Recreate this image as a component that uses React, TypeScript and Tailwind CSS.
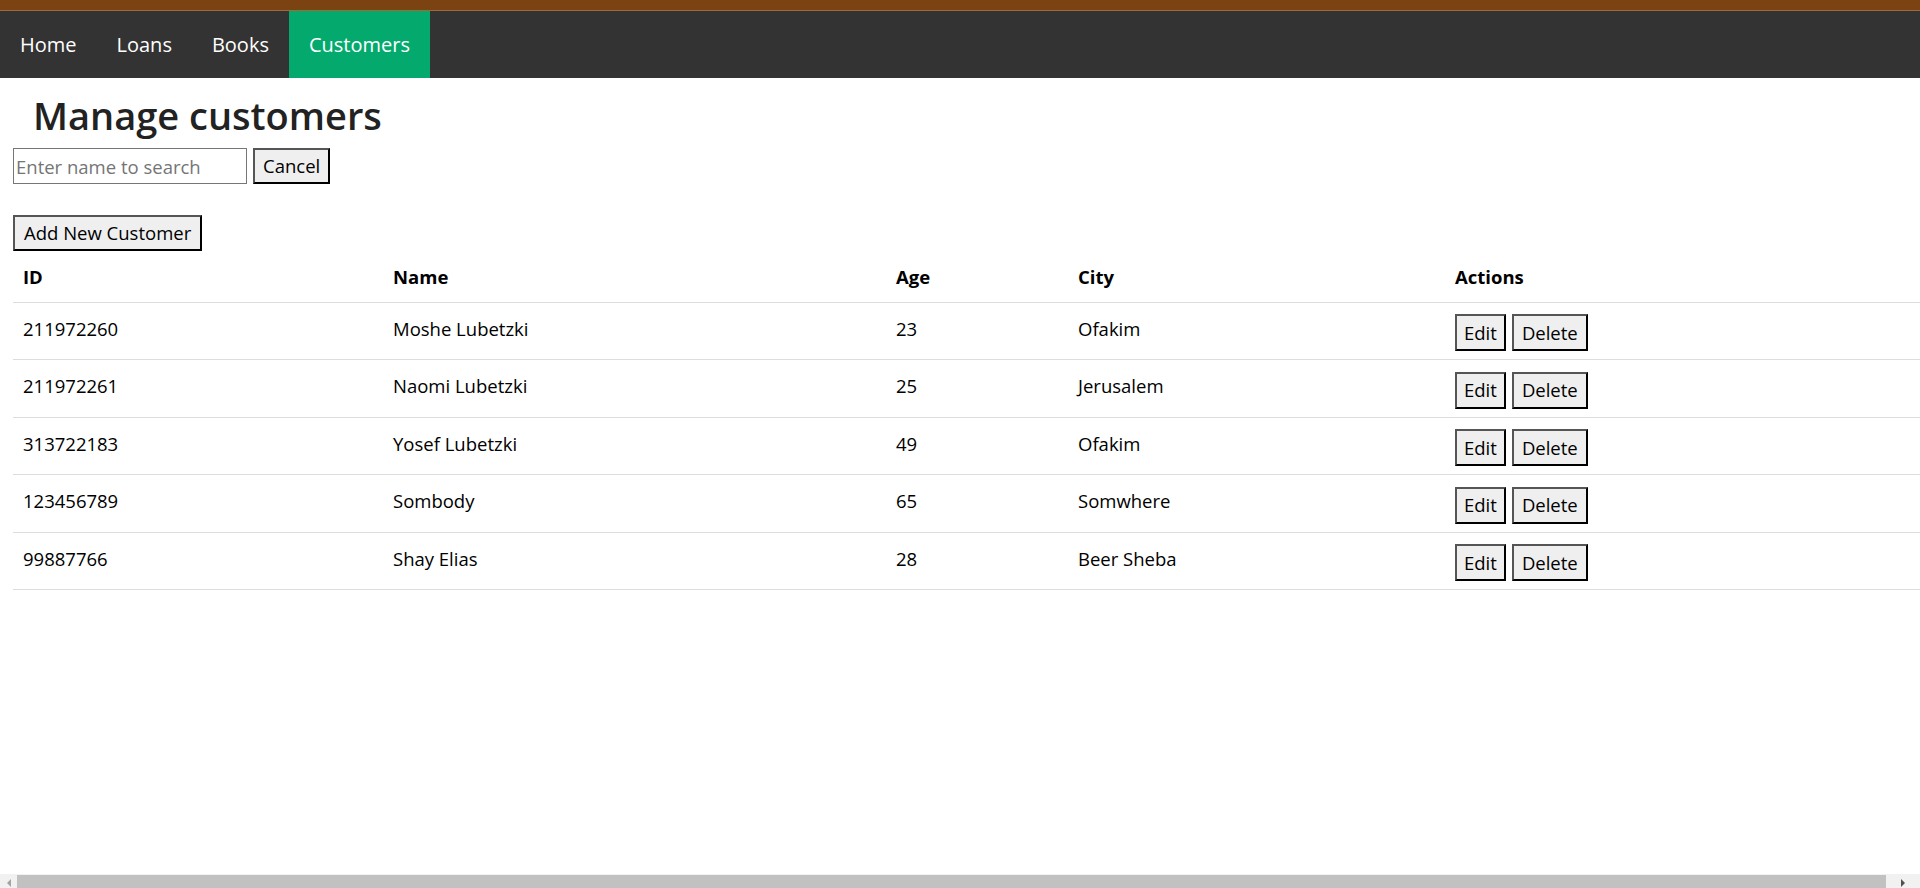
import { useState } from "react";

type Customer = {
  id: string;
  name: string;
  age: number;
  city: string;
};

const customers: Customer[] = [
  { id: "211972260", name: "Moshe Lubetzki", age: 23, city: "Ofakim" },
  { id: "211972261", name: "Naomi Lubetzki", age: 25, city: "Jerusalem" },
  { id: "313722183", name: "Yosef Lubetzki", age: 49, city: "Ofakim" },
  { id: "123456789", name: "Sombody", age: 65, city: "Somwhere" },
  { id: "99887766", name: "Shay Elias", age: 28, city: "Beer Sheba" },
];

const btn =
  "bg-[#efefef] text-black border-2 border-t-[#555] border-l-[#555] border-r-black border-b-black leading-none";

const App = () => {
  const [search, setSearch] = useState("");
  const links = ["Home", "Loans", "Books", "Customers"];

  return (
    <div className="min-h-screen w-[1940px] bg-white text-black font-['Open_Sans',sans-serif] text-[18.5px]">
      {/* top strip */}
      <div className="h-[11px] bg-[#7b4311] border-b border-[#a06a38]" />
      <nav className="flex h-[67px] bg-[#333333]">
        {links.map((l) => (
          <a
            key={l}
            href="#"
            className={`flex items-center px-[20px] text-[20px] text-white ${
              l === "Customers" ? "bg-[#04aa6d]" : ""
            }`}
          >
            {l}
          </a>
        ))}
      </nav>

      <main className="pl-[13px]">
        <h1 className="ml-[20px] mt-[14px] text-[38px] font-semibold leading-[46px] text-[#222]">
          Manage customers
        </h1>
        <div className="mt-[10px] flex gap-[6px]">
          <input
            value={search}
            onChange={(e) => setSearch(e.target.value)}
            placeholder="Enter name to search"
            className="h-[36px] w-[234px] border border-[#767676] px-[2px] text-[18.5px] placeholder:text-[#757575]"
          />
          <button className={`${btn} h-[36px] px-[8px] text-[18.5px]`}>Cancel</button>
        </div>
        <button className={`${btn} mt-[31px] h-[36px] px-[9px] text-[18.5px]`}>
          Add New Customer
        </button>

        <table className="mt-[2px] w-[1927px] border-collapse text-left">
          <thead>
            <tr className="border-b border-[#dddddd]">
              <th className="w-[370px] px-[10px] h-[49px] font-bold">ID</th>
              <th className="w-[503px] px-[10px] font-bold">Name</th>
              <th className="w-[182px] px-[10px] font-bold">Age</th>
              <th className="w-[377px] px-[10px] font-bold">City</th>
              <th className="px-[10px] font-bold">Actions</th>
            </tr>
          </thead>
          <tbody>
            {customers.map((c) => (
              <tr key={c.id} className="border-b border-[#dddddd]">
                <td className="px-[10px] pb-[4px] h-[57.5px]">{c.id}</td>
                <td className="px-[10px] pb-[4px]">{c.name}</td>
                <td className="px-[10px] pb-[4px]">{c.age}</td>
                <td className="px-[10px] pb-[4px]">{c.city}</td>
                <td className="px-[10px] pt-[4px]">
                  <div className="flex gap-[6px]">
                    <button className={`${btn} h-[37px] px-[7px] text-[18.5px]`}>Edit</button>
                    <button className={`${btn} h-[37px] px-[8px] text-[18.5px]`}>Delete</button>
                  </div>
                </td>
              </tr>
            ))}
          </tbody>
        </table>
      </main>

      {/* horizontal scrollbar of the window */}
      <div className="fixed bottom-[-3px] left-0 flex h-[17px] w-[1920px] items-center bg-[#f1f1f1]">
        <div className="flex w-[17px] justify-center">
          <div className="h-0 w-0 border-y-[4px] border-r-[4px] border-y-transparent border-r-[#a3a3a3]" />
        </div>
        <div className="h-[15px] w-[1869px] bg-[#c1c1c1]" />
        <div className="flex flex-1 justify-center">
          <div className="h-0 w-0 border-y-[4px] border-l-[4px] border-y-transparent border-l-[#505050]" />
        </div>
      </div>
    </div>
  );
};

export default App;
